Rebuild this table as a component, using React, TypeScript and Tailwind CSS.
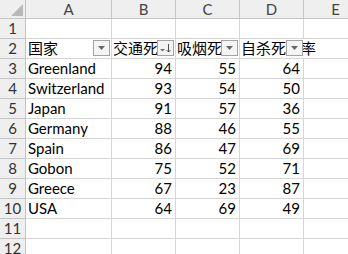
import React from "react";

type Row = { name: string; b: number; c: number; d: number };

const data: Row[] = [
  { name: "Greenland", b: 94, c: 55, d: 64 },
  { name: "Switzerland", b: 93, c: 54, d: 50 },
  { name: "Japan", b: 91, c: 57, d: 36 },
  { name: "Germany", b: 88, c: 46, d: 55 },
  { name: "Spain", b: 86, c: 47, d: 69 },
  { name: "Gobon", b: 75, c: 52, d: 71 },
  { name: "Greece", b: 67, c: 23, d: 87 },
  { name: "USA", b: 64, c: 69, d: 49 },
];

const cols = ["A", "B", "C", "D", "E"];

// Excel-ish autofilter dropdown button
function FilterButton({ sorted = false }: { sorted?: boolean }) {
  return (
    <div className="absolute right-[1px] top-[1px] z-20 flex h-[16px] w-[17px] items-center justify-center border border-[#a3a3a3] bg-[#f4f4f4]">
      {sorted ? (
        <svg width="15" height="14" viewBox="0 0 15 14">
          <polygon points="2,8 7,8 4.5,10.5" fill="#707070" />
          <line x1="10.5" y1="3" x2="10.5" y2="11" stroke="#505050" strokeWidth="1" />
          <polyline points="8.5,9 10.5,11 12.5,9" fill="none" stroke="#505050" strokeWidth="1" />
        </svg>
      ) : (
        <svg width="9" height="6" viewBox="0 0 9 6">
          <polygon points="1,1 8,1 4.5,5" fill="#666666" />
        </svg>
      )}
    </div>
  );
}

export default function App() {
  const font = { fontFamily: 'Lato, "Noto Sans CJK SC", sans-serif' };
  const cell = "h-[20px] border-r border-b border-[#d6d6d6] text-[15px] leading-[19px] whitespace-nowrap";
  const rowHead =
    "h-[20px] border-r border-b border-[#c4c4c4] bg-[#efefef] text-center text-[15px] leading-[19px] text-[#333]";

  return (
    <div className="h-screen w-full overflow-hidden bg-white" style={font}>
      <div className="grid w-[368px] grid-cols-[26px_86px_64px_64px_64px_64px] text-black">
        {/* column headers */}
        <div className="relative h-[19px] border-r border-b border-[#c4c4c4] bg-[#efefef]">
          <svg className="absolute left-0 top-0" width="25" height="18" viewBox="0 0 25 18">
            <polygon points="23,4 23,16 11,16" fill="#b9b9b9" />
          </svg>
        </div>
        {cols.map((c) => (
          <div
            key={c}
            className="h-[19px] border-r border-b border-[#c4c4c4] bg-[#efefef] text-center text-[15px] leading-[18px] text-[#444]"
          >
            {c}
          </div>
        ))}

        {/* row 1 */}
        <div className={rowHead}>1</div>
        {cols.map((c) => (
          <div key={c} className={cell} />
        ))}

        {/* row 2: filter headers */}
        <div className={rowHead}>2</div>
        <div className={`${cell} relative pl-[2px]`}>
          国家
          <FilterButton />
        </div>
        <div className={`${cell} relative pl-[1px]`}>
          交通死亡
          <FilterButton sorted />
        </div>
        <div className={`${cell} relative pl-[1px]`}>
          吸烟死亡
          <FilterButton />
        </div>
        <div className="relative h-[20px] border-b border-[#d6d6d6] pl-[1px] text-[15px] leading-[19px] whitespace-nowrap">
          <span className="relative z-10 bg-white">自杀死亡率</span>
          <FilterButton />
        </div>
        <div className={cell} />

        {data.map((r, i) => (
          <React.Fragment key={r.name}>
            <div className={rowHead}>{i + 3}</div>
            <div className={`${cell} pl-[2px]`}>{r.name}</div>
            <div className={`${cell} pr-[3px] text-right`}>{r.b}</div>
            <div className={`${cell} pr-[3px] text-right`}>{r.c}</div>
            <div className={`${cell} pr-[3px] text-right`}>{r.d}</div>
            <div className={cell} />
          </React.Fragment>
        ))}

        {[11, 12].map((n) => (
          <React.Fragment key={n}>
            <div className={rowHead}>{n}</div>
            {cols.map((c) => (
              <div key={c} className={cell} />
            ))}
          </React.Fragment>
        ))}
      </div>
    </div>
  );
}
